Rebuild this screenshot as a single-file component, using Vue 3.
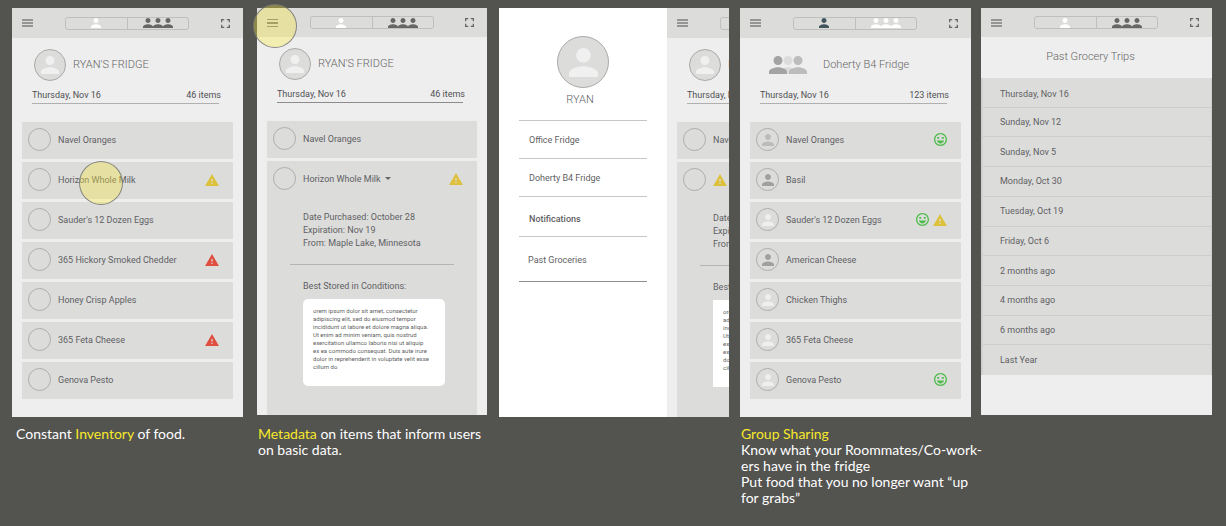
<script setup>
const storage = [
  'orem ipsum dolor sit amet, consectetur',
  'adipiscing elit, sed do eiusmod tempor',
  'incididunt ut labore et dolore magna aliqua.',
  'Ut enim ad minim veniam, quis nostrud',
  'exercitation ullamco laboris nisi ut aliquip',
  'ex ea commodo consequat. Duis aute irure',
  'dolor in reprehenderit in voluptate velit esse',
  'cillum do'
]
const facts = ['Date Purchased: October 28', 'Expiration: Nov 19', 'From: Maple Lake, Minnesota']

const menu = ['Office Fridge', 'Doherty B4 Fridge', 'Notifications', 'Past Groceries']

const trips = [
  'Thursday, Nov 16', 'Sunday, Nov 12', 'Sunday, Nov 5', 'Monday, Oct 30', 'Tuesday, Oct 19',
  'Friday, Oct 6', '2 months ago', '4 months ago', '6 months ago', 'Last Year'
]

const phones = [
  {
    id: 'inventory',
    title: "RYAN'S FRIDGE",
    count: '46 items',
    tap: 'on-item',
    items: [
      { name: 'Navel Oranges' },
      { name: 'Horizon Whole Milk', warn: 'soon' },
      { name: "Sauder's 12 Dozen Eggs" },
      { name: '365 Hickory Smoked Chedder', warn: 'late' },
      { name: 'Honey Crisp Apples' },
      { name: '365 Feta Cheese', warn: 'late' },
      { name: 'Genova Pesto' }
    ],
    caption: [[{ t: 'Constant ' }, { t: 'Inventory', hot: true }, { t: ' of food.' }]]
  },
  {
    id: 'metadata',
    title: "RYAN'S FRIDGE",
    count: '46 items',
    tap: 'on-menu',
    items: [{ name: 'Navel Oranges' }, { name: 'Horizon Whole Milk', warn: 'soon', open: true }],
    caption: [
      [{ t: 'Metadata', hot: true }, { t: ' on items that inform users' }],
      [{ t: 'on basic data.' }]
    ]
  },
  {
    id: 'drawer',
    drawer: true,
    title: "RYAN'S FRIDGE",
    count: '46 items',
    items: [{ name: 'Navel Oranges' }, { name: '', warn: 'soon', open: true }]
  },
  {
    id: 'sharing',
    group: true,
    title: 'Doherty B4 Fridge',
    count: '123 items',
    items: [
      { name: 'Navel Oranges', owner: 'mid', grab: true },
      { name: 'Basil', owner: 'dark' },
      { name: "Sauder's 12 Dozen Eggs", owner: 'pale', grab: true, warn: 'soon' },
      { name: 'American Cheese', owner: 'dark' },
      { name: 'Chicken Thighs', owner: 'pale' },
      { name: '365 Feta Cheese', owner: 'pale' },
      { name: 'Genova Pesto', owner: 'pale', grab: true }
    ],
    caption: [
      [{ t: 'Group Sharing', hot: true }],
      [{ t: 'Know what your Roommates/Co-work-' }],
      [{ t: 'ers have in the fridge' }],
      [{ t: 'Put food that you no longer want “up' }],
      [{ t: 'for grabs”' }]
    ]
  },
  { id: 'trips', trips: true }
]
</script>

<template>
  <main class="board">
    <svg class="defs" aria-hidden="true">
      <symbol id="person" viewBox="4 4 16 16">
        <path d="M12 12c2.21 0 4-1.79 4-4s-1.79-4-4-4-4 1.79-4 4 1.79 4 4 4zm0 2c-2.67 0-8 1.34-8 4v2h16v-2c0-2.66-5.33-4-8-4z" />
      </symbol>
      <symbol id="bars" viewBox="0 0 11 8">
        <path d="M0 0h11v1H0zM0 3h11v2H0zM0 7h11v1H0z" />
      </symbol>
      <symbol id="thick-bars" viewBox="0 0 11 8">
        <path d="M0 0h11v2H0zM0 3h11v2H0zM0 6h11v2H0z" />
      </symbol>
      <symbol id="expand" viewBox="5 5 14 14">
        <path d="M7 14H5v5h5v-2H7v-3zM5 10h2V7h3V5H5v5zm12 7h-3v2h5v-5h-2v3zM14 5v2h3v3h2V5h-5z" />
      </symbol>
      <symbol id="warning" viewBox="1 2 22 19">
        <path d="M1 21h22L12 2 1 21zm12-3h-2v-2h2v2zm0-4h-2v-4h2v4z" />
      </symbol>
      <symbol id="mood" viewBox="2 2 20 20">
        <path d="M12 2C6.47 2 2 6.5 2 12s4.47 10 10 10 10-4.500 10-10S17.500 2 12 2zm0 18c-4.420 0-8-3.580-8-8s3.580-8 8-8 8 3.580 8 8-3.580 8-8 8zM6.500 13.500h11c-.7 2.500-2.900 4.500-5.500 4.500s-4.800-2-5.500-4.500zM7 8h3v3H7zM14 8h3v3h-3z" />
      </symbol>
    </svg>

    <figure v-for="p in phones" :key="p.id" class="col" :class="p.id">
      <div class="frame">
        <nav v-if="p.drawer" class="side" aria-label="Fridges">
          <span class="avatar big"><svg><use href="#person" /></svg></span>
          <p class="owner">RYAN</p>
          <a v-for="m in menu" :key="m" href="#">{{ m }}</a>
        </nav>

        <div class="window">
          <section class="screen">
            <header class="bar">
              <button class="icon menu" type="button" aria-label="Menu">
                <svg><use :href="p.id === 'metadata' ? '#bars' : '#thick-bars'" /></svg>
              </button>
              <div class="switch" :class="{ shared: p.group }">
                <button type="button" aria-label="My fridge"><svg><use href="#person" /></svg></button>
                <button type="button" aria-label="Group fridge">
                  <svg v-for="n in 3" :key="n"><use href="#person" /></svg>
                </button>
              </div>
              <button class="icon full" type="button" aria-label="Full screen"><svg><use href="#expand" /></svg></button>
            </header>

            <template v-if="p.trips">
              <h2 class="heading">Past Grocery Trips</h2>
              <div class="trip-list">
                <a v-for="t in trips" :key="t" href="#">{{ t }}</a>
              </div>
            </template>

            <template v-else>
              <div class="profile" :class="{ shared: p.group }">
                <span v-if="p.group" class="trio">
                  <svg><use href="#person" /></svg>
                  <svg><use href="#person" /></svg>
                  <svg><use href="#person" /></svg>
                </span>
                <span v-else class="avatar"><svg><use href="#person" /></svg></span>
                <h2>{{ p.title }}</h2>
              </div>
              <div class="summary"><span>Thursday, Nov 16</span><span>{{ p.count }}</span></div>
              <hr class="rule" />

              <ul class="items">
                <li v-for="i in p.items" :key="i.name" :class="{ open: i.open }">
                  <div class="row">
                    <span class="dot" :class="i.owner"><svg v-if="i.owner"><use href="#person" /></svg></span>
                    <button v-if="i.open && i.name" class="toggle" type="button" aria-expanded="true">
                      {{ i.name }}<span class="caret"></span>
                    </button>
                    <span v-else-if="i.name">{{ i.name }}</span>
                    <span class="flags" :class="{ near: !i.name }">
                      <svg v-if="i.grab" class="mood"><use href="#mood" /></svg>
                      <svg v-if="i.warn" class="warning" :class="i.warn"><use href="#warning" /></svg>
                    </span>
                  </div>
                  <div v-if="i.open" class="detail">
                    <p v-for="f in facts" :key="f">{{ f }}</p>
                    <hr />
                    <p>Best Stored in Conditions:</p>
                    <div class="note"><div v-for="s in storage" :key="s">{{ s }}</div></div>
                  </div>
                </li>
              </ul>
            </template>
          </section>
        </div>
        <span v-if="p.tap" class="tap" :class="p.tap"></span>
      </div>
      <figcaption v-if="p.caption">
        <div v-for="(line, n) in p.caption" :key="n"><span v-for="s in line" :key="s.t" :class="{ hot: s.hot }">{{ s.t }}</span></div>
      </figcaption>
    </figure>
  </main>
</template>

<style>
body {
  background: #535350;
}
</style>

<style scoped>
.board {
  display: grid;
  grid-template-columns: 245fr 242fr 241fr 241fr 231fr;
  grid-template-rows: auto auto;
  padding: 8px 14px 0 12px;
  font: 9px/14px Roboto, "Liberation Sans", sans-serif;
  color: #5f5f63;
}
.board *, .board {
  box-sizing: border-box;
}
.defs {
  position: absolute;
  width: 0;
  height: 0;
}
svg {
  display: block;
  flex: none;
  fill: currentColor;
}
button {
  padding: 0;
  border: 0;
  background: none;
  font: inherit;
  color: inherit;
}
a {
  color: inherit;
  text-decoration: none;
}
h2, p, ul, figure {
  margin: 0;
  padding: 0;
}
li {
  list-style: none;
}
.col {
  display: grid;
  grid-row: span 2;
  grid-template-rows: subgrid;
  grid-template-columns: minmax(0, 1fr);
  min-width: 0;
}
.inventory { padding-right: 14px; }
.metadata { padding-right: 12px; }
.drawer { padding-right: 11px; }
.sharing { padding-right: 10px; }
.frame {
  position: relative;
  display: flex;
  min-width: 0;
  background: #eee;
}
.metadata .frame, .trips .frame {
  margin-bottom: 2px;
}
.window {
  flex: 1;
  display: flex;
  min-width: 0;
  overflow: hidden;
}
.screen {
  flex: 1;
  display: flex;
  flex-direction: column;
  min-width: 0;
}
.drawer .screen {
  flex: none;
  width: 231px;
}

.bar {
  display: flex;
  align-items: center;
  height: 30px;
  padding: 0 13px 0 10px;
  background: #dcdcdb;
}
.metadata .bar, .trips .bar {
  height: 29px;
}
.menu svg {
  width: 11px;
  height: 8px;
  color: #959595;
}
.metadata .menu svg {
  color: #777;
}
.full {
  margin-left: auto;
  color: #666;
}
.full svg {
  width: 9px;
  height: 9px;
}
.switch {
  display: flex;
  width: 124px;
  height: 13px;
  margin-left: 32px;
  border: 1px solid #bfbfbf;
  border-radius: 3px;
  color: #fff;
}
.switch button {
  flex: 1;
  display: flex;
  align-items: center;
  justify-content: center;
}
.switch button + button {
  border-left: 1px solid #bfbfbf;
  color: #666;
}
.switch svg {
  width: 10px;
  height: 10px;
}
.switch.shared { color: #43535c; }
.switch.shared button + button { color: #fff; }

.profile {
  display: flex;
  align-items: center;
  gap: 7px;
  padding: 11px 20px 0 22px;
}
.profile.shared {
  gap: 16px;
  padding-left: 29px;
}
h2 {
  font-size: 11px;
  font-weight: 300;
  line-height: 16px;
  color: #666;
  white-space: nowrap;
}
.avatar {
  flex: none;
  display: grid;
  place-items: center;
  width: 32px;
  height: 32px;
  border: 1px solid #aaa;
  border-radius: 50%;
  background: #dcdcdb;
  color: #f0f0f0;
}
.avatar svg {
  width: 18px;
  height: 18px;
}
.trio {
  display: flex;
  align-items: center;
  height: 32px;
}
.trio svg {
  position: relative;
  width: 18px;
  height: 18px;
  color: #a3a3a3;
  z-index: 1;
}
.trio svg + svg {
  margin-left: -8px;
  color: #dcdcdc;
  z-index: 0;
}
.trio svg + svg + svg {
  color: #bcbcbc;
  z-index: 1;
}
.summary {
  display: flex;
  justify-content: space-between;
  margin: 7px 22px 1px 20px;
  white-space: nowrap;
  color: #505054;
}
.rule {
  margin: 0 24px 18px 20px;
  border: 0;
  border-top: 1px solid #b0b0b0;
}
.metadata .rule { border-color: #8c8c8c; }

.items {
  flex: 1;
  display: flex;
  flex-direction: column;
  gap: 3px;
  margin: 0 10px 18px;
}
.metadata .items, .drawer .items {
  margin-bottom: 0;
}
.items li {
  background: #dcdcdb;
}
.items .open {
  flex: 1;
}
.row {
  display: flex;
  align-items: center;
  gap: 7px;
  height: 37px;
  padding: 0 14px 2px 6px;
  white-space: nowrap;
}
.dot {
  flex: none;
  display: grid;
  place-items: center;
  width: 23px;
  height: 23px;
  border: 1px solid #adadad;
  border-radius: 50%;
}
.dot svg {
  width: 12px;
  height: 12px;
}
.dot.mid { color: #bcbcbc; }
.dot.dark { color: #a0a0a0; }
.dot.pale { color: #efefef; }
.toggle {
  display: flex;
  align-items: center;
  gap: 4px;
}
.caret {
  border: 3px solid transparent;
  border-top-color: #666;
  border-bottom: 0;
}
.flags {
  display: flex;
  align-items: center;
  gap: 4px;
  margin-left: auto;
}
.flags.near {
  margin-left: 0;
}
.mood {
  width: 13px;
  height: 13px;
  color: #4dbd49;
}
.warning {
  width: 14px;
  height: 12px;
}
.soon { color: #dec13a; }
.late { color: #e04e3f; }

.detail {
  padding: 13px 0 28px 36px;
  line-height: 13px;
  white-space: nowrap;
}
.detail hr {
  margin: 14px 23px 15px -13px;
  border: 0;
  border-top: 1px solid #b5b5b5;
}
.note {
  margin: 6px 32px 0 0;
  padding: 8px 10px 15px;
  border-radius: 5px;
  background: #fff;
  font-size: 6px;
  line-height: 8px;
}
.drawer .note {
  border-radius: 0;
}

.side {
  flex: none;
  display: flex;
  flex-direction: column;
  width: 168px;
  padding: 28px 20px 0;
  background: #fff;
}
.side .big {
  align-self: center;
  width: 52px;
  height: 52px;
}
.big svg {
  width: 29px;
  height: 29px;
}
.owner {
  padding: 4px 6px 12px 0;
  border-bottom: 1px solid #c6c6c6;
  font-size: 11px;
  font-weight: 300;
  line-height: 16px;
  text-align: center;
}
.side a {
  padding: 12px 10px 11px;
  border-bottom: 1px solid #c6c6c6;
}
.side a:nth-of-type(3) {
  padding: 15px 10px 10px;
  font-weight: 500;
}
.side a:last-child {
  padding: 16px 9px 14px;
  border-color: #8e8e8e;
}

.heading {
  padding: 12px 12px 13px 0;
  text-align: center;
}
.trip-list {
  display: grid;
  grid-auto-rows: 1fr;
  min-height: 297px;
  background: #dcdcdb;
  border: solid #d0d0d0;
  border-width: 0 1px 0 2px;
}
.trip-list a {
  display: flex;
  align-items: center;
  padding-left: 17px;
  border-bottom: 1px solid #cdcdcd;
}
.trip-list a:first-child {
  padding-top: 3px;
}
.trip-list a:last-child {
  border-bottom: 0;
}

.tap {
  position: absolute;
  width: 44px;
  height: 44px;
  border: 1px solid rgba(110, 110, 118, 0.8);
  border-radius: 50%;
  background: rgba(250, 235, 60, 0.35);
}
.on-item {
  top: 153px;
  left: 67px;
}
.on-menu {
  top: -4px;
  left: -4px;
}

figcaption {
  padding: 9px 0 0 1px;
  font: 14px/16px Lato, "Open Sans", sans-serif;
  color: #fff;
  white-space: nowrap;
}
figcaption span {
  white-space: pre;
}
.inventory figcaption {
  padding-left: 4px;
}
.hot {
  color: #f7e92b;
}
</style>
